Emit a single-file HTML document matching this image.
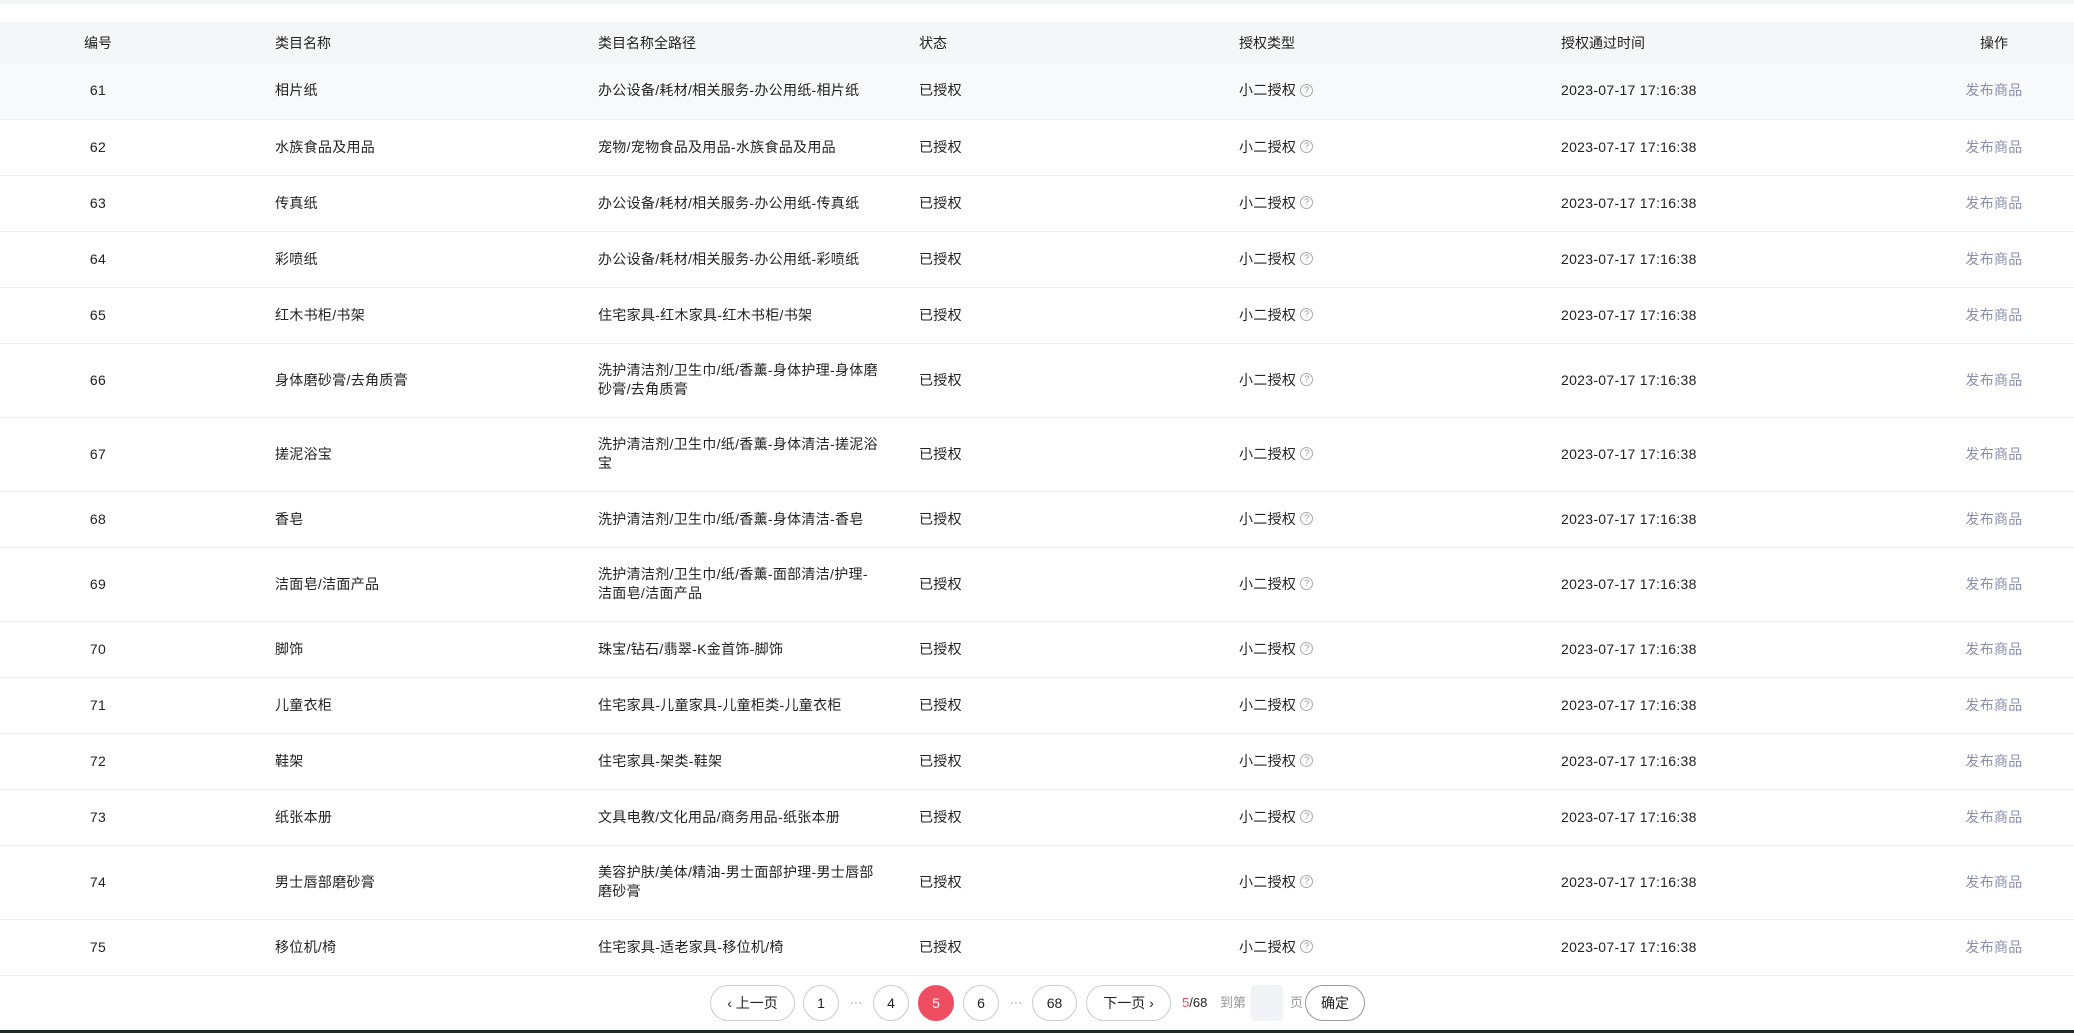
<!DOCTYPE html>
<html><head><meta charset="utf-8"><style>
*{margin:0;padding:0;box-sizing:border-box}
body{width:2074px;height:1033px;background:#fff;font-family:"Liberation Sans","Noto Sans CJK SC",sans-serif;font-size:14px;color:#222;position:relative;overflow:hidden}
.top{position:absolute;left:0;top:0;width:2074px;height:4px;background:#f5f6f8}
table{position:absolute;left:0;top:22px;width:2074px;border-collapse:collapse;table-layout:fixed}
th{background:#f5f6f8;height:41px;font-weight:normal;text-align:left;color:#222;line-height:18px}
td{padding:0;line-height:19px;height:56px;border-bottom:1px solid #eeeff3;vertical-align:middle;white-space:nowrap;letter-spacing:0.3px}
tr.d td{height:74px}
tr.h td{background:#f8f9fb}
.c1{text-align:center}
.c2{padding-left:79px}
.c7{text-align:center}
td.c7{color:#8a8fb0}
.q{display:inline-block;width:13px;height:13px;border:1px solid #aaa;border-radius:50%;font-size:9px;line-height:11px;text-align:center;color:#999;vertical-align:middle;margin:-3px 0 0 4px;letter-spacing:0}
.pg{position:absolute;top:985px;height:36px;border:1px solid #ccc;border-radius:18px;text-align:center;line-height:34px;font-size:14px;color:#222;background:#fff}
.dots{position:absolute;top:985px;line-height:34px;color:#999;font-size:12px}
.t{position:absolute;top:985px;line-height:36px;font-size:13px;color:#999}
.bot{position:absolute;left:0;top:1030px;width:2074px;height:3px;background:#1f2a25}
</style></head><body>
<div class="top"></div>
<table>
<colgroup><col style="width:196px"><col style="width:402px"><col style="width:321px"><col style="width:320px"><col style="width:322px"><col style="width:353px"><col style="width:160px"></colgroup>
<tr><th class="c1">编号</th><th class="c2">类目名称</th><th>类目名称全路径</th><th>状态</th><th>授权类型</th><th>授权通过时间</th><th class="c7">操作</th></tr>
<tr class="h"><td class="c1">61</td><td class="c2">相片纸</td><td>办公设备/耗材/相关服务-办公用纸-相片纸</td><td>已授权</td><td>小二授权<span class="q">?</span></td><td>2023-07-17 17:16:38</td><td class="c7">发布商品</td></tr>
<tr><td class="c1">62</td><td class="c2">水族食品及用品</td><td>宠物/宠物食品及用品-水族食品及用品</td><td>已授权</td><td>小二授权<span class="q">?</span></td><td>2023-07-17 17:16:38</td><td class="c7">发布商品</td></tr>
<tr><td class="c1">63</td><td class="c2">传真纸</td><td>办公设备/耗材/相关服务-办公用纸-传真纸</td><td>已授权</td><td>小二授权<span class="q">?</span></td><td>2023-07-17 17:16:38</td><td class="c7">发布商品</td></tr>
<tr><td class="c1">64</td><td class="c2">彩喷纸</td><td>办公设备/耗材/相关服务-办公用纸-彩喷纸</td><td>已授权</td><td>小二授权<span class="q">?</span></td><td>2023-07-17 17:16:38</td><td class="c7">发布商品</td></tr>
<tr><td class="c1">65</td><td class="c2">红木书柜/书架</td><td>住宅家具-红木家具-红木书柜/书架</td><td>已授权</td><td>小二授权<span class="q">?</span></td><td>2023-07-17 17:16:38</td><td class="c7">发布商品</td></tr>
<tr class="d"><td class="c1">66</td><td class="c2">身体磨砂膏/去角质膏</td><td>洗护清洁剂/卫生巾/纸/香薰-身体护理-身体磨<br>砂膏/去角质膏</td><td>已授权</td><td>小二授权<span class="q">?</span></td><td>2023-07-17 17:16:38</td><td class="c7">发布商品</td></tr>
<tr class="d"><td class="c1">67</td><td class="c2">搓泥浴宝</td><td>洗护清洁剂/卫生巾/纸/香薰-身体清洁-搓泥浴<br>宝</td><td>已授权</td><td>小二授权<span class="q">?</span></td><td>2023-07-17 17:16:38</td><td class="c7">发布商品</td></tr>
<tr><td class="c1">68</td><td class="c2">香皂</td><td>洗护清洁剂/卫生巾/纸/香薰-身体清洁-香皂</td><td>已授权</td><td>小二授权<span class="q">?</span></td><td>2023-07-17 17:16:38</td><td class="c7">发布商品</td></tr>
<tr class="d"><td class="c1">69</td><td class="c2">洁面皂/洁面产品</td><td>洗护清洁剂/卫生巾/纸/香薰-面部清洁/护理-<br>洁面皂/洁面产品</td><td>已授权</td><td>小二授权<span class="q">?</span></td><td>2023-07-17 17:16:38</td><td class="c7">发布商品</td></tr>
<tr><td class="c1">70</td><td class="c2">脚饰</td><td>珠宝/钻石/翡翠-K金首饰-脚饰</td><td>已授权</td><td>小二授权<span class="q">?</span></td><td>2023-07-17 17:16:38</td><td class="c7">发布商品</td></tr>
<tr><td class="c1">71</td><td class="c2">儿童衣柜</td><td>住宅家具-儿童家具-儿童柜类-儿童衣柜</td><td>已授权</td><td>小二授权<span class="q">?</span></td><td>2023-07-17 17:16:38</td><td class="c7">发布商品</td></tr>
<tr><td class="c1">72</td><td class="c2">鞋架</td><td>住宅家具-架类-鞋架</td><td>已授权</td><td>小二授权<span class="q">?</span></td><td>2023-07-17 17:16:38</td><td class="c7">发布商品</td></tr>
<tr><td class="c1">73</td><td class="c2">纸张本册</td><td>文具电教/文化用品/商务用品-纸张本册</td><td>已授权</td><td>小二授权<span class="q">?</span></td><td>2023-07-17 17:16:38</td><td class="c7">发布商品</td></tr>
<tr class="d"><td class="c1">74</td><td class="c2">男士唇部磨砂膏</td><td>美容护肤/美体/精油-男士面部护理-男士唇部<br>磨砂膏</td><td>已授权</td><td>小二授权<span class="q">?</span></td><td>2023-07-17 17:16:38</td><td class="c7">发布商品</td></tr>
<tr><td class="c1">75</td><td class="c2">移位机/椅</td><td>住宅家具-适老家具-移位机/椅</td><td>已授权</td><td>小二授权<span class="q">?</span></td><td>2023-07-17 17:16:38</td><td class="c7">发布商品</td></tr>
</table>
<div class="pg" style="left:710px;width:85px">‹ 上一页</div>
<div class="pg" style="left:803px;width:36px">1</div>
<div class="dots" style="left:850px">···</div>
<div class="pg" style="left:873px;width:36px">4</div>
<div class="pg" style="left:918px;width:36px;background:#ee4d62;border-color:#ee4d62;color:#fff">5</div>
<div class="pg" style="left:963px;width:36px">6</div>
<div class="dots" style="left:1010px">···</div>
<div class="pg" style="left:1032px;width:45px">68</div>
<div class="pg" style="left:1086px;width:85px">下一页 ›</div>
<div class="t" style="left:1182px;color:#222"><span style="color:#ee4d62">5</span>/68</div>
<div class="t" style="left:1220px">到第</div>
<div style="position:absolute;left:1251px;top:985px;width:32px;height:36px;background:#f2f3f6;border-radius:4px"></div>
<div class="t" style="left:1290px">页</div>
<div class="pg" style="left:1305px;width:60px;border-color:#999">确定</div>
<div class="bot"></div>
</body></html>
